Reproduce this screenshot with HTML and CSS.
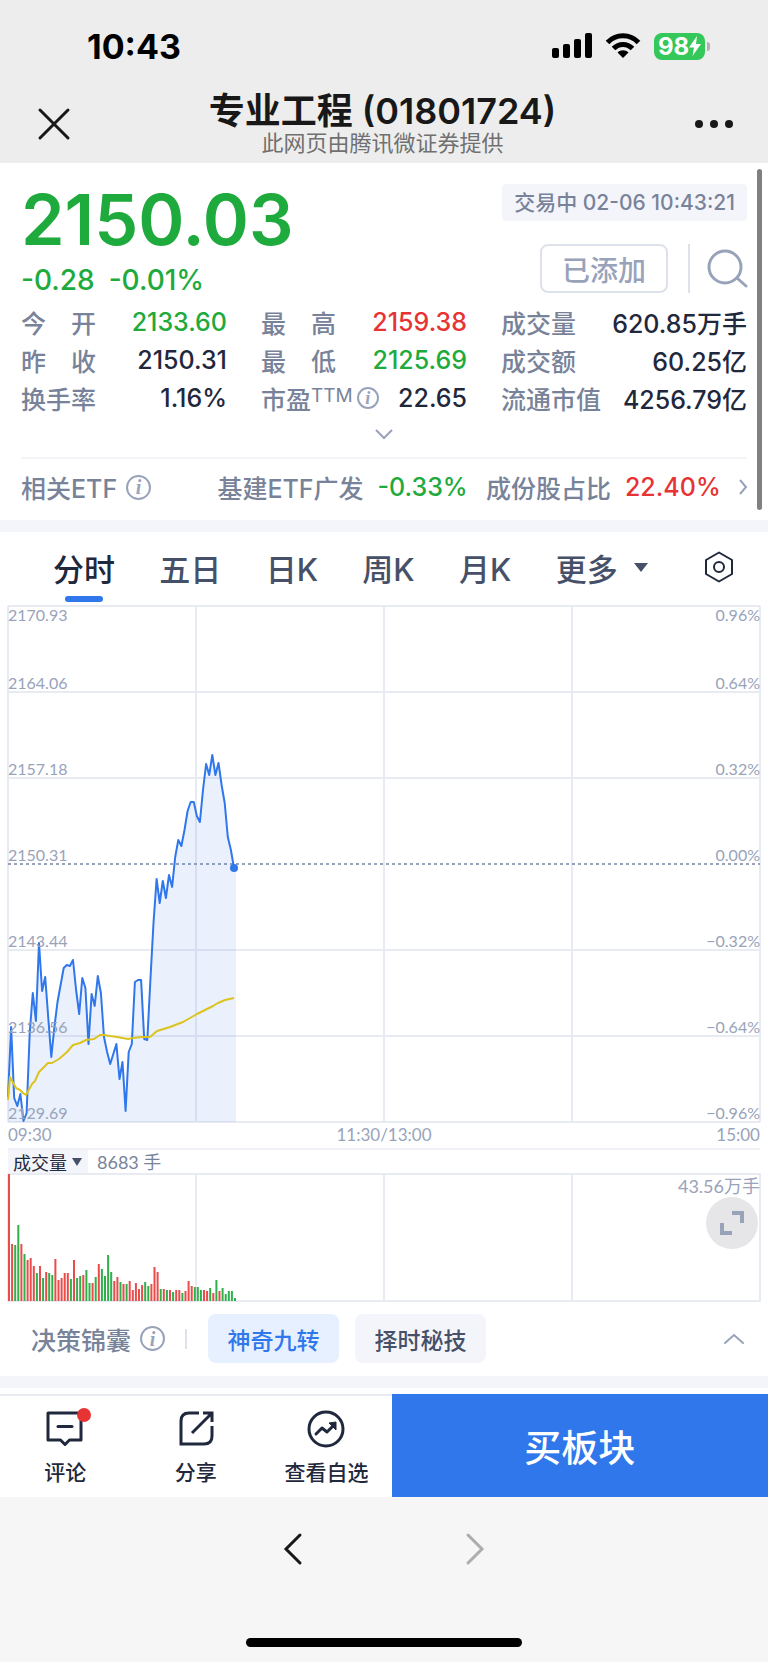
FILE: index.html
```html
<!DOCTYPE html>
<html lang="zh-CN">
<head>
    <meta charset="UTF-8">
    <meta name="viewport" content="width=device-width, initial-scale=1.0">
    <title>专业工程 (01801724)</title>
    <link rel="stylesheet" href="styles.css">
</head>
<body>

    <!-- 顶部 -->
    <header>
        <div class="status">
            <span class="clock">10:43</span>
            <div class="status-icons">
                <svg width="40" height="26" viewBox="0 0 40 26"><rect x="0" y="15" width="7" height="10" rx="2"/><rect x="11" y="11" width="7" height="14" rx="2"/><rect x="22" y="6" width="7" height="19" rx="2"/><rect x="33" y="0" width="7" height="25" rx="2"/></svg>
                <svg width="36" height="26" viewBox="0 0 36 26" fill="none" stroke="#000" stroke-width="5"><path d="M2.500 9.500C11 0.500 25 0.500 33.500 9.500"/><path d="M8.500 15.500C14 10 22 10 27.500 15.500"/><path d="M18 25l-5.500-5.500c3-3 8-3 11 0z" fill="#000" stroke="none"/></svg>
                <div class="battery">98<svg width="12" height="20" viewBox="0 0 12 20"><path d="M8 0L0 11.500h5L3.500 20 12 8H7z" fill="#fff"/></svg></div>
            </div>
        </div>
        <div class="titlebar">
            <button class="icon-btn" aria-label="关闭">
                <svg width="32" height="32" viewBox="0 0 32 32" fill="none" stroke="#181818" stroke-width="3" stroke-linecap="round"><path d="M2 2l28 28M30 2L2 30"/></svg>
            </button>
            <div class="title">
                <h1>专业工程 (01801724)</h1>
                <p>此网页由腾讯微证券提供</p>
            </div>
            <button class="icon-btn" aria-label="菜单">
                <svg width="38" height="8" viewBox="0 0 38 8" fill="#181818"><circle cx="4" cy="4" r="4"/><circle cx="19" cy="4" r="4"/><circle cx="34" cy="4" r="4"/></svg>
            </button>
        </div>
    </header>

    <!-- 行情 -->
    <section class="quote">
        <div class="scrollbar"></div>
        <div class="quote-top">
            <div>
                <div class="price">2150.03</div>
                <div class="change"><span>-0.28</span><span>-0.01%</span></div>
            </div>
            <div class="quote-side">
                <div class="time">交易中 02-06 10:43:21</div>
                <div class="actions">
                    <button class="added">已添加</button>
                    <button class="search" aria-label="搜索">
                        <svg width="40" height="40" viewBox="0 0 40 40" fill="none" stroke="#98a3ba" stroke-width="3" stroke-linecap="round"><circle cx="18" cy="18" r="16"/><path d="M30 29l9 8"/></svg>
                    </button>
                </div>
            </div>
        </div>
        <div class="stats">
            <dl>
                <div><dt class="wide">今 开</dt><dd class="down">2133.60</dd></div>
                <div><dt class="wide">昨 收</dt><dd>2150.31</dd></div>
                <div><dt>换手率</dt><dd>1.16%</dd></div>
            </dl>
            <dl>
                <div><dt class="wide">最 高</dt><dd class="up">2159.38</dd></div>
                <div><dt class="wide">最 低</dt><dd class="down">2125.69</dd></div>
                <div><dt>市盈<sup>TTM</sup><i class="info small">i</i></dt><dd>22.65</dd></div>
            </dl>
            <dl>
                <div><dt>成交量</dt><dd>620.85万手</dd></div>
                <div><dt>成交额</dt><dd>60.25亿</dd></div>
                <div><dt>流通市值</dt><dd>4256.79亿</dd></div>
            </dl>
        </div>
        <button class="expand" aria-label="展开">
            <svg width="18" height="11" viewBox="0 0 18 11" fill="none" stroke="#98a3ba" stroke-width="2"><path d="M1 1l8 8 8-8"/></svg>
        </button>
        <a class="etf" href="#">
            <span class="etf-name">相关ETF<i class="info">i</i></span>
            <span>基建ETF广发 <b class="down">-0.33%</b></span>
            <span>成份股占比 <b class="up">22.40%</b></span>
            <svg width="8" height="16" viewBox="0 0 8 16" fill="none" stroke="#98a3ba" stroke-width="2"><path d="M1 1l6 7-6 7"/></svg>
        </a>
    </section>

    <!-- 走势图 -->
    <section class="chart">
        <nav class="tabs">
            <button class="active">分时</button>
            <button>五日</button>
            <button>日K</button>
            <button>周K</button>
            <button>月K</button>
            <button>更多<svg width="14" height="9" viewBox="0 0 14 9"><path d="M0 0h14L7 9z" fill="#465068"/></svg></button>
            <button class="setting" aria-label="设置">
                <svg width="30" height="32" viewBox="0 0 30 32" fill="none" stroke="#1f283c" stroke-width="2"><path d="M15 1.500L28 9v14L15 30.500 2 23V9z" stroke-linejoin="round"/><circle cx="15" cy="16" r="5"/></svg>
            </button>
        </nav>

        <div class="plot">
            <svg class="price-svg" viewBox="0 0 752 516" preserveAspectRatio="none">
                <g class="grid">
                    <path d="M0 0H752M0 86H752M0 172H752M0 344H752M0 430H752M0 516H752"/>
                    <path d="M0 0V516M188 0V516M376 0V516M564 0V516M752 0V516"/>
                </g>
                <path class="zero" d="M0 258H752"/>
                <polygon class="area" id="area"/>
                <polyline class="line" id="line"/>
                <polyline class="avg" id="avg"/>
                <circle cx="226" cy="262" r="4" fill="#2f77eb"/>
            </svg>
            <div class="axis">
                <div><span>2170.93</span><span>2164.06</span></div>
                <div><span>2157.18</span></div>
                <div><span>2150.31</span></div>
                <div><span>2143.44</span></div>
                <div><span>2136.56</span></div>
                <div><span>2129.69</span></div>
            </div>
            <div class="axis right">
                <div><span>0.96%</span><span>0.64%</span></div>
                <div><span>0.32%</span></div>
                <div><span>0.00%</span></div>
                <div><span>−0.32%</span></div>
                <div><span>−0.64%</span></div>
                <div><span>−0.96%</span></div>
            </div>
        </div>
        <div class="hours"><span>09:30</span><span>11:30/13:00</span><span>15:00</span></div>

        <div class="vol-head">
            <button>成交量<svg width="10" height="8" viewBox="0 0 10 8"><path d="M0 0h10L5 8z" fill="#465068"/></svg></button>
            <span>8683 手</span>
        </div>
        <div class="volume">
            <svg class="volume-svg" viewBox="0 0 752 127" preserveAspectRatio="none">
                <path class="grid" d="M0 0H752V127H0zM188 0V127M376 0V127M564 0V127"/>
                <g id="bars"></g>
            </svg>
            <span class="vol-max">43.56万手</span>
            <button class="full" aria-label="全屏">
                <svg width="26" height="26" viewBox="0 0 26 26" fill="none" stroke="#98a3ba" stroke-width="4"><path d="M13 3h10v10M3 13v10h10"/></svg>
            </button>
        </div>

        <div class="tips">
            <span class="tips-name">决策锦囊<i class="info">i</i></span>
            <button class="tip on">神奇九转</button>
            <button class="tip">择时秘技</button>
            <button class="fold" aria-label="收起">
                <svg width="20" height="11" viewBox="0 0 20 11" fill="none" stroke="#98a3ba" stroke-width="2" stroke-linecap="round"><path d="M1 10l9-8 9 8"/></svg>
            </button>
        </div>
    </section>

    <!-- 底部操作栏 -->
    <div class="bottom">
        <button class="item">
            <svg width="48" height="40" viewBox="0 0 48 40" fill="none" stroke="#1f283c" stroke-width="3"><path d="M7 5H40V32H28.500L24 36.500 19.500 32H7z" stroke-linejoin="round"/><path d="M17 18.500h14" stroke-linecap="round"/><circle cx="43" cy="7" r="7" fill="#e63434" stroke="none"/></svg>
            评论
        </button>
        <button class="item">
            <svg width="48" height="40" viewBox="0 0 48 40" fill="none" stroke="#1f283c" stroke-width="3"><path d="M27 5H17Q9 5 9 13V36H32Q40 36 40 28V18M20 25L39 6M31 5h9v9"/></svg>
            分享
        </button>
        <button class="item">
            <svg width="48" height="40" viewBox="0 0 48 40" fill="none" stroke="#1f283c" stroke-width="3"><circle cx="24" cy="21" r="17"/><path d="M14 26l6-6 5 4 7-7" stroke-linejoin="round" stroke-linecap="round"/><path d="M27 15l7-1v8z" fill="#1f283c" stroke-width="1"/></svg>
            查看自选
        </button>
        <button class="buy">买板块</button>
    </div>

    <footer>
        <div class="pager">
            <button aria-label="后退"><svg width="20" height="32" viewBox="0 0 20 32" fill="none" stroke="#181818" stroke-width="3" stroke-linecap="round"><path d="M17 2L3 16l14 14"/></svg></button>
            <button aria-label="前进"><svg width="20" height="32" viewBox="0 0 20 32" fill="none" stroke="#adadad" stroke-width="3" stroke-linecap="round"><path d="M3 2l14 14L3 30"/></svg></button>
        </div>
        <div class="home"></div>
    </footer>

    <script>
        // 每分钟价格的纵坐标
        const price = [491, 421, 492, 500, 488, 515, 507, 427, 387, 415, 337, 385, 371, 411, 451, 421, 396, 379, 362, 359,
            360, 354, 384, 408, 372, 382, 438, 388, 400, 370, 387, 431, 446, 458, 448, 438, 473, 456, 505, 446,
            438, 376, 374, 374, 433, 434, 374, 317, 273, 297, 275, 292, 269, 281, 251, 234, 240, 224, 205, 196,
            196, 210, 216, 184, 158, 169, 149, 169, 157, 179, 197, 231, 244, 262];

        // 均价线
        const avg = '0,494 2,471 8,482 12,484 15,487 18,489 24,478 27,475 31,466 37,460 40,457 44,457 51,453 59,446 65,439 72,437 78,434 86,433 92,429 96,429 102,430 109,431 120,433 125,432 134,431 142,431 149,425 162,421 175,416 182,412 189,408 197,404 205,400 210,397 217,394 226,392';

        // 成交量：r 涨 g 跌
        const volume = 'r127 r57 g56 g76 r57 g47 r41 r43 r35 g28 r35 g23 r29 g28 g26 r42 r21 r23 r28 r28 g22 r41 g23 g25 r26 g31 g18 r18 g24 r37 g32 g25 g46 g29 r20 r24 g19 r17 g17 r20 r11 r18 r12 r16 g19 g15 r17 r34 r29 g12 r12 g11 r11 g9 r11 r11 g8 r10 r20 r15 g14 g14 g11 r11 r10 g13 r8 g21 r10 g13 g7 g10 g10 g3'.split(' ');

        const step = 226 / (price.length - 1);
        const points = price.map((y, i) => (i * step).toFixed(1) + ',' + y).join(' ');
        document.getElementById('line').setAttribute('points', points);
        document.getElementById('area').setAttribute('points', points + ' 228,262 228,516 0,516');
        document.getElementById('avg').setAttribute('points', avg);

        document.getElementById('bars').innerHTML = volume.map((v, i) => {
            const h = Number(v.slice(1));
            return `<rect class="${v[0] === 'r' ? 'bar-up' : 'bar-down'}" x="${(i * step).toFixed(1)}" y="${127 - h}" width="2" height="${h}"/>`;
        }).join('');
    </script>

</body>
</html>
```
FILE: styles.css
```css
* {
    box-sizing: border-box;
}

body {
    margin: 0;
    font-family: Inter, "Noto Sans CJK SC", sans-serif;
    background: #f6f6f6;
    color: #1f283c;
}

button {
    background: none;
    border: none;
    padding: 0;
    margin: 0;
    font-family: inherit;
    color: inherit;
    cursor: pointer;
}

svg {
    display: block;
    overflow: visible;
}

/* 顶部 */
header {
    background: #ededed;
    height: 163px;
}

.status {
    display: flex;
    justify-content: space-between;
    align-items: center;
    height: 92px;
    padding: 0 63px 0 87px;
}

.clock {
    font-size: 34px;
    font-weight: 700;
    color: #000;
}

.status-icons {
    display: flex;
    align-items: center;
    gap: 13px;
}

.battery {
    display: flex;
    align-items: center;
    justify-content: center;
    width: 51px;
    height: 27px;
    border-radius: 8px;
    background: #34c759;
    color: #fff;
    font-size: 24px;
    font-weight: 700;
    position: relative;
}

.battery::after {
    content: "";
    position: absolute;
    right: -5px;
    top: 9px;
    width: 3px;
    height: 9px;
    border-radius: 0 3px 3px 0;
    background: #b0b0b0;
}

.titlebar {
    display: flex;
    justify-content: space-between;
    align-items: center;
    height: 64px;
    padding: 0 35px 0 38px;
}

.title {
    text-align: center;
    color: #181818;
}

.title h1 {
    margin: 0;
    font-size: 36px;
    line-height: 38px;
    font-weight: 600;
}

.title p {
    margin: 0;
    font-size: 22px;
    line-height: 26px;
    color: #707070;
}

/* 行情 */
.quote {
    position: relative;
    background: #fff;
    padding: 21px 21px 5px;
    border-bottom: 12px solid #f4f5fa;
}

.scrollbar {
    position: absolute;
    right: 6px;
    top: 6px;
    bottom: 10px;
    width: 5px;
    border-radius: 3px;
    background: #808080;
}

.quote-top {
    display: flex;
    justify-content: space-between;
    height: 119px;
}

.price {
    font-size: 70px;
    line-height: 72px;
    font-weight: 600;
    color: #1eaa3c;
}

.change {
    display: flex;
    gap: 14px;
    font-size: 28px;
    line-height: 48px;
    font-weight: 500;
    color: #1eaa3c;
}

.quote-side {
    display: flex;
    flex-direction: column;
    align-items: flex-end;
    gap: 23px;
}

.time {
    padding: 0 12px;
    border-radius: 4px;
    background: #f4f5fa;
    color: #78839a;
    font-size: 21px;
    line-height: 37px;
    font-weight: 500;
}

.actions {
    display: flex;
    align-items: center;
}

.added {
    width: 128px;
    height: 49px;
    border: 2px solid #dde1ea;
    border-radius: 8px;
    color: #98a3ba;
    font-size: 28px;
    font-weight: 500;
}

.search {
    height: 49px;
    margin-left: 20px;
    padding-left: 17px;
    border-left: 2px solid #dde1ea;
}

.stats {
    display: grid;
    grid-template-columns: 206fr 206fr 246fr;
    gap: 34px;
}

.stats dl {
    margin: 0;
}

.stats dl div {
    display: flex;
    justify-content: space-between;
    align-items: center;
    height: 38px;
}

.stats dt {
    display: flex;
    align-items: center;
    color: #78839a;
    font-size: 25px;
    font-weight: 500;
    white-space: nowrap;
}

.stats dt.wide {
    display: block;
    width: 75px;
    text-align-last: justify;
}

.stats dd {
    margin: 0;
    font-size: 25px;
    font-weight: 500;
    white-space: nowrap;
}

.stats sup {
    font-size: 19px;
    line-height: 19px;
    font-weight: 400;
    align-self: flex-start;
    margin-top: 6px;
}

.up {
    color: #e63434;
}

.down {
    color: #1eaa3c;
}

.info {
    display: inline-flex;
    align-items: center;
    justify-content: center;
    width: 25px;
    height: 25px;
    margin-left: 9px;
    border: 2px solid #98a3ba;
    border-radius: 50%;
    color: #98a3ba;
    font: italic bold 20px/20px "Liberation Serif", serif;
}

.info.small {
    width: 22px;
    height: 22px;
    margin-left: 4px;
    font-size: 18px;
}

.expand {
    display: flex;
    width: 100%;
    height: 40px;
    padding-top: 12px;
    justify-content: center;
}

.etf {
    display: flex;
    justify-content: space-between;
    align-items: center;
    height: 58px;
    border-top: 2px solid #f4f5f8;
    color: #78839a;
    font-size: 25px;
    font-weight: 500;
    text-decoration: none;
    white-space: nowrap;
}

.etf b {
    margin-left: 14px;
    font-weight: 500;
}

.etf span {
    display: flex;
    align-items: center;
}

.etf-name {
    margin-right: 48px;
}

/* 走势图 */
.chart {
    background: #fff;
    border-bottom: 12px solid #f4f5fa;
}

.tabs {
    display: flex;
    justify-content: space-between;
    height: 74px;
    padding: 0 34px 0 53px;
}

.tabs button {
    display: flex;
    align-items: center;
    gap: 16px;
    padding-bottom: 4px;
    color: #465068;
    font-size: 31px;
    font-weight: 500;
    position: relative;
}

.tabs .active {
    color: #1f283c;
}

.tabs .active::after {
    content: "";
    position: absolute;
    left: 12px;
    right: 12px;
    bottom: 4px;
    height: 6px;
    border-radius: 3px;
    background: #2f77eb;
}

.tabs .setting {
    margin-left: 12px;
}

.plot {
    position: relative;
    margin: 0 8px;
}

.price-svg,
.volume-svg {
    width: 100%;
    height: 516px;
}

.volume-svg {
    height: 127px;
}

.grid {
    fill: none;
    stroke: #e9ebf2;
    stroke-width: 2;
}

.zero {
    stroke: #98a3ba;
    stroke-width: 2;
    stroke-dasharray: 3 3;
}

.area {
    fill: rgba(47, 119, 235, 0.1);
}

.line,
.avg {
    fill: none;
    stroke: #2f77eb;
    stroke-width: 2;
    stroke-linejoin: round;
}

.avg {
    stroke: #dcc31e;
}

.bar-up {
    fill: #ea4b4b;
}

.bar-down {
    fill: #2fb04a;
}

.axis {
    position: absolute;
    top: 0;
    bottom: 0;
    left: 0;
    display: grid;
    grid-template-rows: repeat(6, 1fr);
    color: #98a3ba;
    font-family: Lato, sans-serif;
    font-size: 16px;
    line-height: 18px;
}

.axis.right {
    left: auto;
    right: 0;
    text-align: right;
}

.axis div {
    display: flex;
    flex-direction: column;
    justify-content: flex-end;
}

.axis div:first-child {
    justify-content: space-between;
}

.hours {
    display: flex;
    justify-content: space-between;
    margin: 0 8px;
    border-bottom: 2px solid #f0f1f6;
    color: #98a3ba;
    font-family: Lato, sans-serif;
    font-size: 17px;
    line-height: 26px;
}

.vol-head {
    display: flex;
    gap: 9px;
    height: 24px;
    margin: 0 8px;
    color: #78839a;
    font-family: Lato, "Noto Sans CJK SC", sans-serif;
    font-size: 18px;
    line-height: 24px;
}

.vol-head button {
    display: flex;
    align-items: center;
    gap: 5px;
    padding: 0 6px 0 5px;
    background: #f4f5fa;
    color: #1f283c;
    font-size: 18px;
}

.volume {
    position: relative;
    margin: 0 8px;
}

.vol-max {
    position: absolute;
    right: 0;
    top: 0;
    color: #98a3ba;
    font-family: Lato, "Noto Sans CJK SC", sans-serif;
    font-size: 18px;
    line-height: 24px;
}

.full {
    position: absolute;
    right: 2px;
    top: 23px;
    display: flex;
    align-items: center;
    justify-content: center;
    width: 52px;
    height: 52px;
    border-radius: 50%;
    background: #e6e6e8;
}

.tips {
    display: flex;
    align-items: center;
    gap: 16px;
    height: 75px;
    padding: 0 24px 0 31px;
}

.tips-name {
    display: flex;
    align-items: center;
    color: #78839a;
    font-size: 25px;
    font-weight: 500;
}

.tips-name::after {
    content: "";
    height: 20px;
    margin: 0 5px 0 20px;
    border-left: 2px solid #dde1ea;
}

.tip {
    width: 131px;
    height: 49px;
    border-radius: 8px;
    background: #f4f5fa;
    color: #465068;
    font-size: 23px;
    font-weight: 500;
}

.tip.on {
    background: #e6f0ff;
    color: #2f77eb;
}

.fold {
    margin-left: auto;
}

/* 底部操作栏 */
.bottom {
    display: grid;
    grid-template-columns: 17fr 17fr 17fr 49fr;
    height: 109px;
    padding-top: 6px;
    background: #fff;
}

.item {
    display: flex;
    flex-direction: column;
    align-items: center;
    gap: 10px;
    padding-top: 12px;
    border-top: 2px solid #e9ebf2;
    font-size: 21px;
    line-height: 30px;
    font-weight: 500;
}

.buy {
    background: #2f77eb;
    color: #fff;
    font-size: 37px;
    font-weight: 500;
}

/* 浏览器底栏 */
footer {
    height: 165px;
    padding-top: 36px;
}

.pager {
    display: flex;
    justify-content: center;
    gap: 162px;
}

.home {
    width: 36%;
    height: 9px;
    margin: 73px auto 0;
    border-radius: 5px;
    background: #000;
}
```
